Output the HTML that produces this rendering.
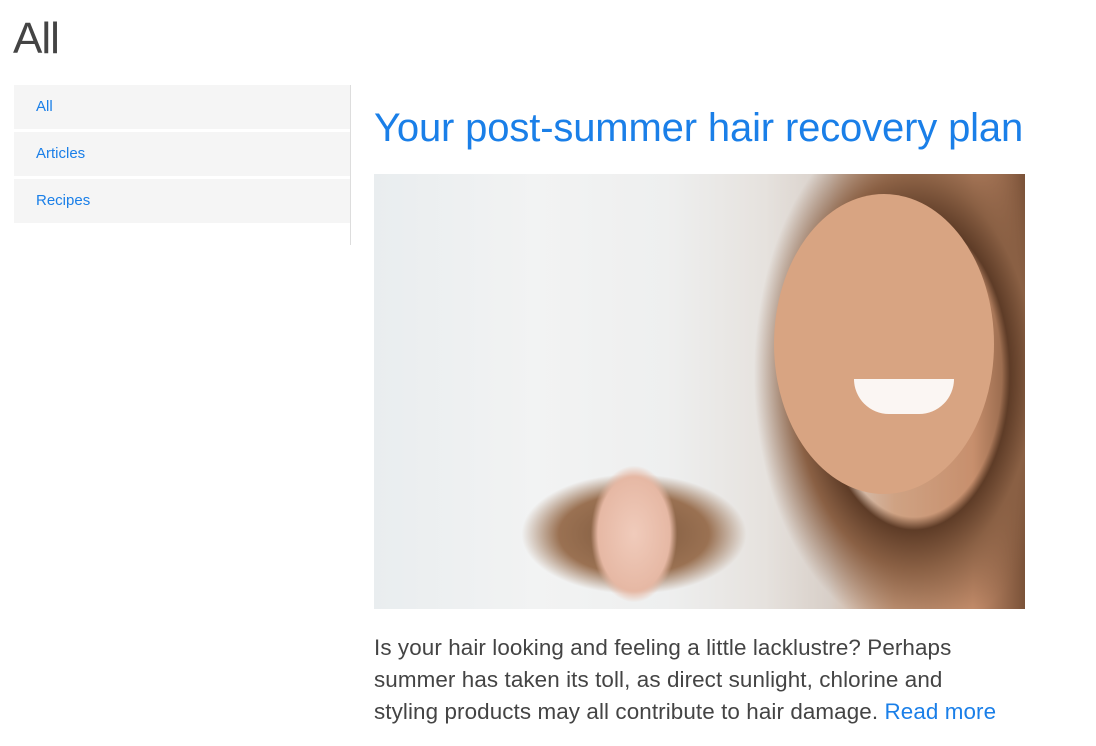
<!DOCTYPE html>
<html><head><meta charset="utf-8"><style>
body{margin:0;background:#fff;font-family:"Liberation Sans",sans-serif;width:1096px;height:746px;overflow:hidden;position:relative}
h1{position:absolute;left:13px;top:14px;margin:0;font-size:44px;font-weight:normal;color:#444;letter-spacing:-1px}
.side{position:absolute;left:14px;top:85px;width:336px;border-right:1px solid #ddd;height:160px}
.side div{background:#f5f5f5;height:44px;margin-bottom:3px;font-size:15px;color:#1a7fe8;line-height:44px;padding-left:22px}
.t{position:absolute;left:374px;top:106px;margin:0;font-size:40px;font-weight:normal;color:#1a7fe8;letter-spacing:-0.15px}
.img{position:absolute;left:374px;top:174px;width:651px;height:435px;overflow:hidden;
background:linear-gradient(90deg,#e9edef 0%,#f2f3f3 25%,#eeefef 45%,#e6e2de 60%,#d8cfc8 70%,#cfa283 80%,#c78f6d 92%,#7a5238 100%)}
p{position:absolute;left:374px;top:632px;margin:0;width:650px;font-size:22.4px;line-height:32px;color:#444;letter-spacing:0.1px}
p a{color:#1a7fe8;text-decoration:none}
</style></head><body>
<h1>All</h1>
<div class="side"><div>All</div><div>Articles</div><div>Recipes</div></div>
<h2 class="t">Your post-summer hair recovery plan</h2>
<div class="img">
<div style="position:absolute;left:340px;top:0;width:311px;height:435px;background:radial-gradient(ellipse 160px 260px at 200px 200px,transparent 55%,#5e3c27 60%,#8a6044 75%,transparent 100%)"></div>
<div style="position:absolute;left:400px;top:20px;width:220px;height:300px;border-radius:50%;background:#d8a482"></div>
<div style="position:absolute;left:110px;top:250px;width:300px;height:185px;background:radial-gradient(ellipse 150px 80px at 150px 110px,#7d583d 0%,#9a7152 50%,transparent 75%)"></div>
<div style="position:absolute;left:190px;top:250px;width:150px;height:185px;background:radial-gradient(ellipse 60px 95px at 70px 110px,#f0cbbb 0%,#e6b8a4 60%,transparent 72%)"></div>
<div style="position:absolute;left:480px;top:205px;width:100px;height:35px;background:#fff;border-radius:0 0 50px 50px;opacity:.9"></div>
</div>
<p>Is your hair looking and feeling a little lacklustre? Perhaps<br>summer has taken its toll, as direct sunlight, chlorine and<br>styling products may all contribute to hair damage. <a>Read more</a></p>
</body></html>
